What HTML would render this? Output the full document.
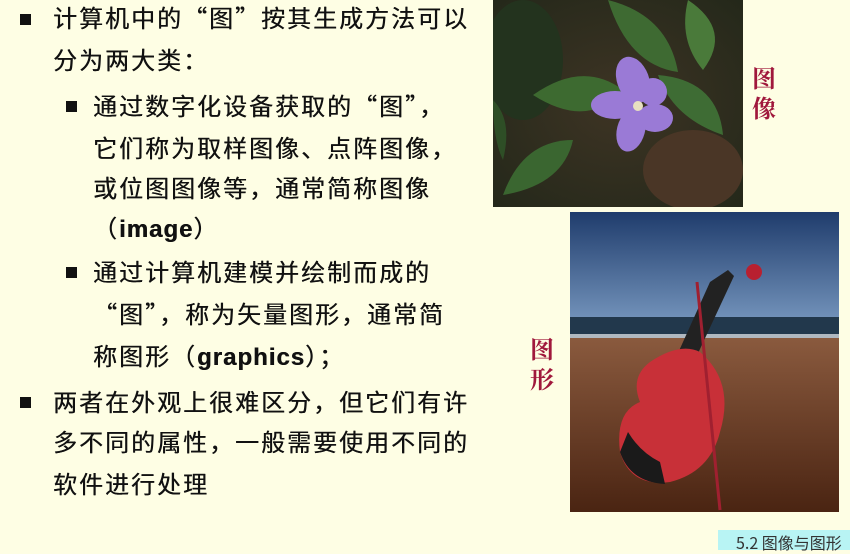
<!DOCTYPE html>
<html><head><meta charset="utf-8"><style>
body{margin:0;width:850px;height:550px;background:#fefee4;position:relative;overflow:hidden;font-family:"Noto Sans CJK SC",sans-serif;color:#111}
.l{position:absolute;font-size:24px;letter-spacing:2px;white-space:nowrap;line-height:30px;top:0;text-shadow:0.4px 0 0 #111}
.l b{font-family:"Liberation Sans",sans-serif;letter-spacing:1px}
.b{position:absolute;width:11px;height:11px;background:#111}
.r{position:absolute;color:#a0183c;font-size:24px;line-height:30px;width:26px;font-family:"Noto Serif CJK SC",serif;font-weight:bold}
</style></head><body>
<div class="b" style="left:20px;top:14px"></div>
<div class="l" style="left:53px;top:2px">计算机中的“图”按其生成方法可以</div>
<div class="l" style="left:53px;top:44px">分为两大类：</div>
<div class="b" style="left:66px;top:101px"></div>
<div class="l" style="left:93px;top:90px">通过数字化设备获取的“图”，</div>
<div class="l" style="left:93px;top:132px">它们称为取样图像、点阵图像，</div>
<div class="l" style="left:93px;top:172px">或位图图像等，通常简称图像</div>
<div class="l" style="left:93px;top:212px">（<b>image</b>）</div>
<div class="b" style="left:66px;top:267px"></div>
<div class="l" style="left:93px;top:256px">通过计算机建模并绘制而成的</div>
<div class="l" style="left:93px;top:298px">“图”，称为矢量图形，通常简</div>
<div class="l" style="left:93px;top:340px">称图形（<b>graphics</b>）；</div>
<div class="b" style="left:20px;top:397px"></div>
<div class="l" style="left:53px;top:386px">两者在外观上很难区分，但它们有许</div>
<div class="l" style="left:53px;top:426px">多不同的属性，一般需要使用不同的</div>
<div class="l" style="left:53px;top:468px">软件进行处理</div>

<svg style="position:absolute;left:493px;top:0" width="250" height="207">
<defs><radialGradient id="bg" cx="0.5" cy="0.5" r="0.7"><stop offset="0" stop-color="#3e3424"/><stop offset="1" stop-color="#24281a"/></radialGradient></defs>
<rect width="250" height="207" fill="url(#bg)"/>
<ellipse cx="30" cy="60" rx="40" ry="60" fill="#23331e"/>
<ellipse cx="200" cy="170" rx="50" ry="40" fill="#4a3626"/>
<path d="M115 0 Q175 15 185 72 Q135 65 115 0Z" fill="#3e6a32"/>
<path d="M195 0 Q240 30 210 70 Q185 40 195 0Z" fill="#4a7a3a"/>
<path d="M40 95 Q90 60 130 90 Q95 130 40 95Z" fill="#3d6a30"/>
<path d="M165 75 Q225 80 230 135 Q180 118 165 75Z" fill="#3e6c34"/>
<path d="M10 195 Q30 140 80 140 Q70 185 10 195Z" fill="#3a6630"/>
<path d="M0 100 Q20 120 10 160 Q0 140 0 100Z" fill="#2e4e26"/>
<g fill="#9a7ad6"><ellipse cx="140" cy="80" rx="16" ry="24" transform="rotate(-20 140 80)"/><ellipse cx="122" cy="105" rx="24" ry="14"/><ellipse cx="138" cy="130" rx="14" ry="22" transform="rotate(15 138 130)"/><ellipse cx="162" cy="118" rx="18" ry="14"/><ellipse cx="160" cy="92" rx="14" ry="14"/></g>
<circle cx="145" cy="106" r="5" fill="#e8e0c0"/>
</svg>
<div class="r" style="left:752px;top:62px">图<br>像</div>

<svg style="position:absolute;left:570px;top:212px" width="269" height="300">
<defs><linearGradient id="sky" x1="0" y1="0" x2="0" y2="1"><stop offset="0" stop-color="#1f3c6c"/><stop offset="1" stop-color="#7090b8"/></linearGradient>
<linearGradient id="sand" x1="0" y1="0" x2="0" y2="1"><stop offset="0" stop-color="#8a5a3e"/><stop offset="1" stop-color="#4a2412"/></linearGradient></defs>
<rect width="269" height="105" fill="url(#sky)"/>
<rect y="105" width="269" height="20" fill="#22384c"/>
<rect y="122" width="269" height="4" fill="#b0b8c0"/>
<rect y="126" width="269" height="174" fill="url(#sand)"/>
<path d="M140 70 L158 58 L164 64 L110 180 L95 170Z" fill="#222"/>
<path d="M80 150 Q110 130 130 140 Q165 170 150 220 Q140 260 100 270 Q60 275 50 240 Q45 200 70 190 Q60 165 80 150Z" fill="#c83038"/>
<path d="M50 240 Q60 270 95 272 L90 250 Q70 240 58 220Z" fill="#1a1a1a"/>
<circle cx="184" cy="60" r="8" fill="#b82030"/>
<line x1="127" y1="70" x2="150" y2="298" stroke="#a02030" stroke-width="3"/>
</svg>
<div class="r" style="left:530px;top:333px">图<br>形</div>

<div style="position:absolute;left:718px;top:530px;width:132px;height:20px;background:#b8f4f4;font-size:16px;line-height:24px;color:#333;padding-left:18px;box-sizing:border-box;white-space:nowrap">5.2 图像与图形</div>
</body></html>
